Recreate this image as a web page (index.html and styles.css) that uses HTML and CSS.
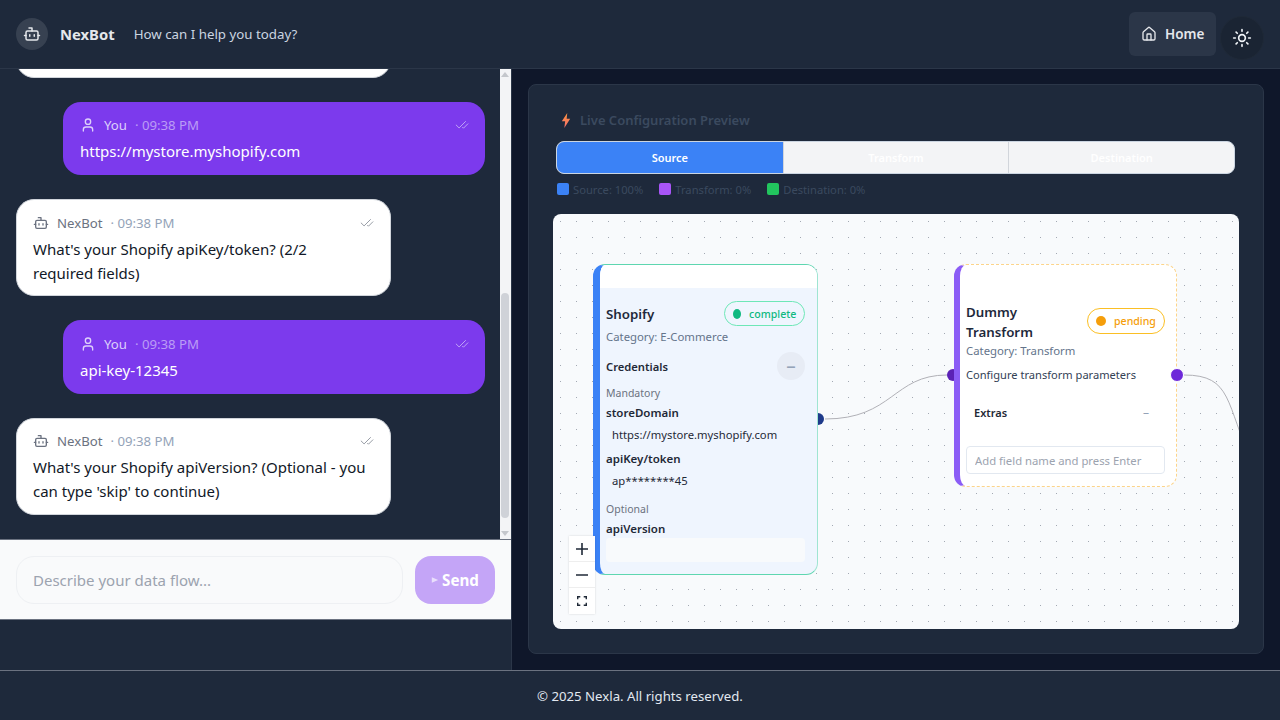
FILE: index.html
```html
<!DOCTYPE html>
<html lang="en">
<head>
<meta charset="utf-8">
<title>NexBot</title>
<link rel="stylesheet" href="styles.css">
</head>
<body>
<svg class="defs" aria-hidden="true">
  <symbol id="i-bot" viewBox="0 0 24 24"><path d="M12 8V4H8"/><rect x="4" y="8" width="16" height="12" rx="2"/><path d="M2 14h2M20 14h2M15 13v2M9 13v2"/></symbol>
  <symbol id="i-user" viewBox="0 0 24 24"><path d="M19 21v-2a4 4 0 0 0-4-4H9a4 4 0 0 0-4 4v2"/><circle cx="12" cy="7" r="4"/></symbol>
  <symbol id="i-check" viewBox="0 0 24 24"><path d="M18 6 7 17l-5-5"/><path d="m22 10-7.5 7.5L13 16"/></symbol>
</svg>
<header class="topbar">
  <div class="brand">
    <span class="avatar"><svg class="ic ic-18"><use href="#i-bot"/></svg></span>
    <strong class="brand-name">NexBot</strong>
    <span class="tagline">How can I help you today?</span>
  </div>
  <nav class="top-actions">
    <a class="home-btn"><svg class="ic ic-16" viewBox="0 0 24 24"><path d="M15 21v-8a1 1 0 0 0-1-1h-4a1 1 0 0 0-1 1v8"/><path d="M3 10a2 2 0 0 1 .709-1.528l7-5.999a2 2 0 0 1 2.582 0l7 5.999A2 2 0 0 1 21 10v9a2 2 0 0 1-2 2H5a2 2 0 0 1-2-2z"/></svg>Home</a>
    <span class="theme-btn"><svg class="ic ic-20" viewBox="0 0 24 24"><circle cx="12" cy="12" r="4"/><path d="M12 2v2M12 20v2m-7.07-17.07 1.41 1.41m11.32 11.32 1.41 1.41M2 12h2M20 12h2M6.34 17.66l-1.41 1.41M19.07 4.93l-1.41 1.41"/></svg></span>
  </nav>
</header>
<main class="main">
  <section class="chat">
    <div class="chat-scroll">
      <div class="messages">
        <article class="bubble bot clipped"></article>
        <article class="bubble user">
          <div class="meta"><svg class="ic ic-16"><use href="#i-user"/></svg><span class="who">You</span><span class="time">· 09:38 PM</span><svg class="ic ic-14 tick"><use href="#i-check"/></svg></div>
          <p class="text">https://mystore.myshopify.com</p>
        </article>
        <article class="bubble bot">
          <div class="meta"><svg class="ic ic-16"><use href="#i-bot"/></svg><span class="who">NexBot</span><span class="time">· 09:38 PM</span><svg class="ic ic-14 tick"><use href="#i-check"/></svg></div>
          <p class="text">What's your Shopify apiKey/token? (2/2<br>required fields)</p>
        </article>
        <article class="bubble user">
          <div class="meta"><svg class="ic ic-16"><use href="#i-user"/></svg><span class="who">You</span><span class="time">· 09:38 PM</span><svg class="ic ic-14 tick"><use href="#i-check"/></svg></div>
          <p class="text">api-key-12345</p>
        </article>
        <article class="bubble bot">
          <div class="meta"><svg class="ic ic-16"><use href="#i-bot"/></svg><span class="who">NexBot</span><span class="time">· 09:38 PM</span><svg class="ic ic-14 tick"><use href="#i-check"/></svg></div>
          <p class="text">What's your Shopify apiVersion? (Optional - you<br>can type 'skip' to continue)</p>
        </article>
      </div>
      <div class="scrollbar">
        <span class="arrow up"></span>
        <span class="thumb"></span>
        <span class="arrow down"></span>
      </div>
    </div>
    <form class="composer">
      <input class="composer-input" placeholder="Describe your data flow...">
      <button class="send" type="button"><svg class="send-ic" viewBox="0 0 10 10"><path d="M1 1.500 9 5 1 8.500z"/></svg>Send</button>
    </form>
  </section>
  <section class="preview">
    <div class="panel">
      <h2 class="panel-title">
        <svg class="bolt" viewBox="0 0 12 18"><defs><linearGradient id="bolt-g" x1="0" y1="0" x2="0" y2="1"><stop offset="0" stop-color="#fb923c"/><stop offset="1" stop-color="#f87171"/></linearGradient></defs><path d="M7.500 0 1 10h4l-1 8 7-11H6.800z" fill="url(#bolt-g)"/></svg>
        Live Configuration Preview
      </h2>
      <div class="tabs">
        <span class="tab active">Source</span>
        <span class="tab">Transform</span>
        <span class="tab">Destination</span>
      </div>
      <ul class="legend">
        <li><i class="sq blue"></i>Source: 100%</li>
        <li><i class="sq purple"></i>Transform: 0%</li>
        <li><i class="sq green"></i>Destination: 0%</li>
      </ul>
      <div class="canvas">
        <svg class="edges" viewBox="0 0 686 415">
          <path d="M272 205C340 205 340 161 394 161"/>
          <path d="M631 161C680 161 672 190 700 250"/>
        </svg>
        <span class="handle h-out-blue"></span>
        <span class="handle h-in-purple"></span>
        <span class="handle h-out-purple"></span>

        <div class="node node-source">
          <div class="node-strip"></div>
          <div class="node-body">
            <div class="node-head">
              <h3 class="node-name">Shopify</h3>
              <span class="badge ok"><i></i>complete</span>
            </div>
            <p class="cat">Category: E-Commerce</p>
            <div class="section-head"><b>Credentials</b><span class="collapse">–</span></div>
            <p class="group">Mandatory</p>
            <p class="field">storeDomain</p>
            <p class="value">https://mystore.myshopify.com</p>
            <p class="field">apiKey/token</p>
            <p class="value">ap********45</p>
            <p class="group opt">Optional</p>
            <p class="field">apiVersion</p>
            <div class="empty-input"></div>
          </div>
        </div>

        <div class="node node-transform">
          <div class="node-body">
            <div class="node-head">
              <h3 class="node-name narrow">Dummy Transform</h3>
              <span class="badge warn"><i></i>pending</span>
            </div>
            <p class="cat tight">Category: Transform</p>
            <p class="desc">Configure transform parameters</p>
            <div class="extras"><b>Extras</b><span class="dash">–</span></div>
            <input class="add-field" placeholder="Add field name and press Enter">
          </div>
        </div>

        <div class="controls">
          <span class="ctl"><svg viewBox="0 0 14 14"><path d="M7 1v12M1 7h12"/></svg></span>
          <span class="ctl"><svg viewBox="0 0 14 14"><path d="M1 7h12"/></svg></span>
          <span class="ctl"><svg class="thin" viewBox="0 0 14 14"><path d="M2 5V2h3M9 2h3v3M12 9v3H9M5 12H2V9"/></svg></span>
        </div>
      </div>
    </div>
  </section>
</main>
<footer class="footer">© 2025 Nexla. All rights reserved.</footer>
</body>
</html>
```
FILE: styles.css
```css
* { box-sizing: border-box; }
html, body { margin: 0; height: 100%; }
body {
  display: flex;
  flex-direction: column;
  height: 720px;
  overflow: hidden;
  font-family: "Noto Sans", "Open Sans", sans-serif;
  background: #0f172a;
  color: #e2e8f0;
}
p, h2, h3, ul { margin: 0; padding: 0; }
.defs { display: none; }
.ic { fill: none; stroke: currentColor; stroke-width: 2; stroke-linecap: round; stroke-linejoin: round; flex: none; }
.ic-14 { width: 14px; height: 14px; }
.ic-16 { width: 16px; height: 16px; }
.ic-18 { width: 18px; height: 18px; }
.ic-20 { width: 20px; height: 20px; }

/* top bar */
.topbar {
  height: 69px;
  flex: none;
  display: flex;
  align-items: center;
  justify-content: space-between;
  padding: 0 16px;
  background: #1e293b;
  border-bottom: 1px solid #2b3648;
}
.brand { display: flex; align-items: center; }
.avatar {
  width: 32px; height: 32px;
  border-radius: 50%;
  background: #374151;
  color: #e5e7eb;
  display: flex; align-items: center; justify-content: center;
}
.brand-name { margin-left: 12px; font-size: 14.800px; font-weight: 700; color: #e5e7eb; }
.tagline { margin-left: 19px; font-size: 13.300px; color: #cbd5e1; }
.top-actions { display: flex; align-items: flex-start; align-self: flex-start; gap: 4px; margin-top: 12px; }
.home-btn {
  width: 87px; height: 44px;
  display: flex; align-items: center; gap: 8px;
  padding-left: 12px;
  border-radius: 6px;
  background: #2b3648;
  color: #e5e7eb;
  font-size: 13.500px;
  font-weight: 600;
}
.theme-btn {
  width: 44px; height: 44px;
  margin-top: 4px;
  border-radius: 50%;
  background: #1a2433;
  border: 1px solid #1f2937;
  color: #f1f5f9;
  display: flex; align-items: center; justify-content: center;
}

/* main */
.main { flex: 1; display: flex; min-height: 0; }
.chat {
  width: 512px;
  flex: none;
  display: flex;
  flex-direction: column;
  background: #1e293b;
  border-right: 1px solid #2b3648;
}
.chat-scroll { height: 470px; flex: none; display: flex; }
.messages {
  flex: 1;
  min-width: 0;
  overflow: hidden;
  display: flex;
  flex-direction: column;
  justify-content: flex-end;
  gap: 24px;
  padding: 0 16px 24px;
}
.bubble { flex: none; border-radius: 18px; }
.bubble.bot { width: 375px; background: #fff; color: #111827; border: 1px solid #d1d5db; padding: 10.500px 16px 10.750px; }
.bubble.user { width: 422px; margin-left: 47px; background: #7c3aed; color: #fff; padding: 11.500px 16px 12px 17px; }
.bubble.clipped { height: 90px; }
.meta { display: flex; align-items: center; height: 22px; margin-top: 1px; margin-bottom: 3px; font-size: 13.200px; }
.who { margin-left: 8px; }
.time { margin-left: 8px; opacity: .65; }
.bubble.bot .meta { color: #6b7280; }
.bubble.bot .time { color: #94a3b8; opacity: 1; }
.bubble.user .meta { color: #ddd0fb; }
.tick { margin-left: auto; opacity: .8; stroke-width: 1.500; }
.text { font-size: 15px; line-height: 24px; }
.scrollbar {
  width: 11px; flex: none;
  position: relative;
  background: #f3f4f6;
}
.arrow { position: absolute; left: 1px; width: 0; height: 0; border-left: 4px solid transparent; border-right: 4px solid transparent; }
.arrow.up { top: 3px; border-bottom: 5px solid #c4c7cc; }
.arrow.down { bottom: 3px; border-top: 5px solid #c4c7cc; }
.thumb { position: absolute; top: 224px; left: 1px; width: 8px; height: 225px; border-radius: 4px; background: #cfd2d8; }

.composer {
  height: 81px;
  flex: none;
  display: flex;
  align-items: flex-start;
  gap: 12px;
  padding: 16px 16px 0;
  background: #f9fafb;
  border-top: 1px solid #6b7280;
  border-bottom: 1px solid #6b7280;
}
.composer-input {
  width: 387px; height: 48px;
  border: 1px solid #eef0f3;
  border-radius: 18px;
  background: #f9fafb;
  padding: 0 16px;
  font: 15px "Noto Sans", sans-serif;
  color: #374151;
}
.composer-input::placeholder { color: #9ca3af; }
.send {
  width: 80px; height: 48px;
  border: 0;
  border-radius: 16px;
  background: #c4a5f7;
  color: #fff;
  font: 700 15.200px "Noto Sans", sans-serif;
  display: flex; align-items: center; justify-content: center; gap: 3px;
  padding: 0 0 1px;
}
.send-ic { width: 8px; height: 8px; fill: #e9defc; }

/* preview */
.preview { flex: 1; min-width: 0; padding: 15px 16px 16px; }
.panel {
  height: 570px;
  background: #1e293b;
  border: 1px solid #2b3648;
  border-radius: 8px;
  padding: 24px;
  display: flex;
  flex-direction: column;
}
.panel-title {
  display: flex; align-items: center; gap: 9px;
  height: 22px;
  padding-left: 8px;
  font-size: 13px;
  font-weight: 600;
  color: #3b4a5f;
}
.bolt { width: 10px; height: 15px; flex: none; }
.tabs {
  margin: 10px 4px 0 3px;
  height: 33px;
  display: grid;
  grid-template-columns: repeat(3, 1fr);
  border: 1px solid #cbd5e1;
  border-radius: 8px;
  overflow: hidden;
  background: #f3f4f6;
}
.tab {
  display: flex; align-items: center; justify-content: center;
  font-size: 11px;
  font-weight: 600;
  color: #fff;
  border-left: 1px solid #d1d5db;
}
.tab:first-child { border-left: 0; }
.tab.active { background: #3b82f6; }
.legend {
  list-style: none;
  display: flex;
  gap: 16px;
  margin: 7px 0 0 4px;
  height: 16px;
  font-size: 11.200px;
  color: #3b4a5f;
}
.legend li { display: flex; align-items: center; gap: 4px; }
.sq { width: 12px; height: 12px; border-radius: 2px; }
.sq.blue { background: #3b82f6; }
.sq.purple { background: #a855f7; }
.sq.green { background: #22c55e; }

.canvas {
  position: relative;
  margin-top: 17px;
  width: 686px;
  height: 415px;
  border-radius: 8px;
  overflow: hidden;
  background-color: #f8fafc;
  background-image: radial-gradient(circle at 7.500px 7.500px, #a3a9b3 .65px, transparent .8px);
  background-size: 16px 16px;
}
.edges { position: absolute; inset: 0; width: 686px; height: 415px; fill: none; stroke: #b1b1b7; stroke-width: 1; }
.handle { position: absolute; z-index: 1; width: 12px; height: 12px; border-radius: 50%; }
.h-out-blue { left: 259px; top: 199px; background: #1e3a8a; }
.h-in-purple { left: 394px; top: 155px; background: #5b21b6; }
.h-out-purple { left: 617px; top: 154px; z-index: 3; background: #6d28d9; border: 1px solid #fff; width: 14px; height: 14px; }

.node { position: absolute; z-index: 2; background: #fff; overflow: hidden; border-radius: 12px; color: #1f2937; }
.node-source {
  left: 40px; top: 50px;
  width: 225px; height: 311px;
  border: 1px solid #5ed6b0;
  border-right-color: #9fe5d2;
  border-left: 7px solid #3b82f6;
  background: #eff5fe;
}
.node-strip { height: 23px; background: #fff; }
.node-transform {
  left: 401px; top: 50px;
  width: 223px; height: 223px;
  border: 1px dashed #fcd48a;
  border-left: 6px solid #8b5cf6;
}
.node-body { padding: 0 12px 0 6px; }
.node-transform .node-body { padding-right: 11px; }
.node-head { display: flex; align-items: center; justify-content: space-between; }
.node-source .node-head { height: 25px; margin-top: 13px; }
.node-transform .node-head { height: 40px; margin-top: 37px; }
.node-source .cat { margin-top: 3px; }
.node-name { font-size: 13.300px; line-height: 20px; font-weight: 600; color: #1e293b; }
.narrow { width: 90px; }
.badge {
  display: flex; align-items: center; gap: 8px;
  height: 25px;
  padding: 0 8px;
  border-radius: 13px;
  font-size: 10.600px;
  font-weight: 500;
  background: #fff;
}
.badge i { width: 10px; height: 10px; border-radius: 50%; flex: none; }
.badge.ok { width: 81px; border: 1px solid #6ee7b7; color: #10b981; background: transparent; }
.badge.ok i { background: #10b981; width: 8px; }
.badge.warn { width: 78px; height: 26px; margin-top: -3px; border: 1px solid #fbbf24; color: #f59e0b; }
.badge.warn i { background: #f59e0b; }
.cat { font-size: 11.350px; line-height: 16px; margin-top: 2px; color: #64748b; }
.cat.tight { margin-top: 1px; }
.section-head { display: flex; align-items: center; justify-content: space-between; height: 28px; margin-top: 7px; }
.section-head b { font-size: 11.200px; font-weight: 600; color: #1f2937; }
.collapse { width: 28px; height: 28px; border-radius: 50%; background: #e7ecf5; color: #94a3b8; display: flex; align-items: center; justify-content: center; font-size: 19px; }
.group { font-size: 10.500px; line-height: 16px; margin-top: 5px; color: #6b7280; }
.opt { margin-top: 12px; }
.field { font-size: 11.500px; line-height: 16px; margin-top: 4px; font-weight: 600; color: #1f2937; }
.value { font-size: 11.250px; line-height: 16px; margin: 6px 0 8px; padding-left: 6px; color: #1f2937; }
.empty-input { height: 24px; margin-top: 1px; border-radius: 4px; background: #f8fafc; }
.desc { font-size: 11.100px; line-height: 16px; margin-top: 8px; color: #334155; }
.extras { display: flex; justify-content: space-between; align-items: center; height: 20px; margin-top: 19px; padding: 0 16px 0 8px; }
.extras b { font-size: 11px; font-weight: 600; color: #1f2937; }
.dash { color: #94a3b8; font-size: 12px; }
.add-field {
  display: block;
  width: 199px; height: 28px;
  margin-top: 24px;
  padding: 0 8px;
  border: 1px solid #e2e8f0;
  border-radius: 4px;
  font: 11.300px "Noto Sans", sans-serif;
  background: #fff;
}
.add-field::placeholder { color: #9ca3af; }
.controls {
  position: absolute; z-index: 4;
  left: 16px; top: 322px;
  width: 26px;
  background: #fff;
  box-shadow: 0 0 2px rgba(0,0,0,.15);
}
.ctl { display: flex; align-items: center; justify-content: center; height: 26px; border-bottom: 1px solid #eee; }
.ctl:last-child { border-bottom: 0; }
.ctl svg { width: 14px; height: 14px; fill: none; stroke: #1f2937; stroke-width: 1.600; }
.ctl svg.thin { width: 12px; height: 12px; }

.footer {
  height: 50px;
  flex: none;
  display: flex; align-items: center; justify-content: center;
  background: #1e293b;
  border-top: 1px solid #6b7280;
  font-size: 13.200px;
  color: #e2e8f0;
}
```
